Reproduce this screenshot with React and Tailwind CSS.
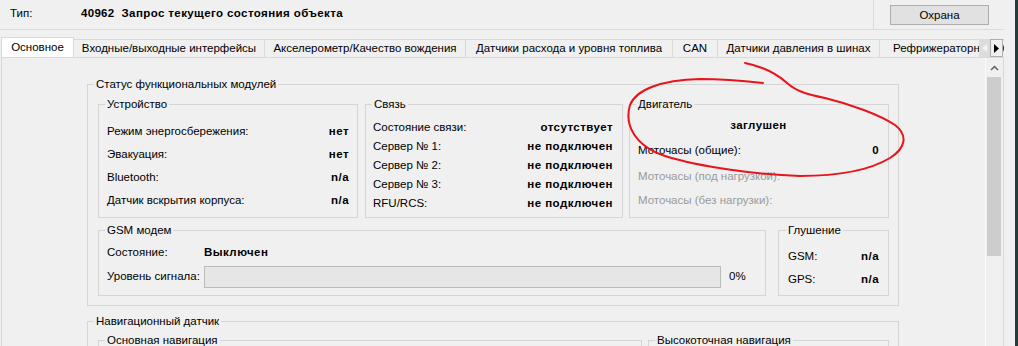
import React from "react";

const tabs = [
    ["Основное", "w-[73px]"],
    ["Входные/выходные интерфейсы", "w-[191px]"],
    ["Акселерометр/Качество вождения", "w-[201px]"],
    ["Датчики расхода и уровня топлива", "w-[207px]"],
    ["CAN", "w-[45px]"],
    ["Датчики давления в шинах", "w-[162px]"],
    ["Рефрижераторное оборудование", "px-[13px]"],
];

function Group({ title, className = "", legend = "ml-[6px]", children }) {
    return (
        <fieldset className={`border border-[#d5d5d5] min-w-0 ${className}`}>
            <legend className={`${legend} px-[2px] leading-[13px] whitespace-nowrap`}>{title}</legend>
            {children}
        </fieldset>
    );
}

function Row({ label, value, h = "h-[23px]", muted }) {
    return (
        <div className={`flex items-center justify-between ${h}`}>
            <span className={muted ? "text-[#9a9a9a]" : ""}>{label}</span>
            {value && <span className="font-bold tracking-[0.45px]">{value}</span>}
        </div>
    );
}

function Scrollbar() {
    return (
        <div className="w-[17px] flex flex-col bg-[#f0f0f0] border-l border-[#fafafa]">
            <div className="h-[19px] flex items-center justify-center">
                <svg width="9" height="6" viewBox="0 0 9 6">
                    <path d="M1 5 L4.5 1.5 L8 5" fill="none" stroke="#606060" strokeWidth="1.5" />
                </svg>
            </div>
            <div className="mx-[1px] h-[179px] bg-[#cdcdcd]" />
        </div>
    );
}

export default function App() {
    return (
        <div className="relative flex w-[1018px] h-[346px] overflow-hidden bg-[#f0f0f0] text-black text-[11.5px] font-['Liberation_Sans',Arial,sans-serif]">
            <div className="w-[1004px] flex flex-col">
                {/* header */}
                <header className="flex h-[30px] shrink-0 border-b border-[#dcdcdc]">
                    <div className="w-[873px] flex items-center pl-[10px] pb-[1px]">
                        <span className="w-[71px]">Тип:</span>
                        <span className="font-bold tracking-[0.3px]">40962</span>
                        <span className="font-bold tracking-[0.4px] ml-[7px]">Запрос текущего состояния объекта</span>
                    </div>
                    <div className="flex-1 border-l border-[#dcdcdc] pl-[16px] pt-[5px]">
                        <button className="w-[99px] h-[20px] border border-[#adadad] bg-[#e1e1e1] leading-[18px]">
                            Охрана
                        </button>
                    </div>
                </header>

                {/* tab strip */}
                <div className="relative flex items-end h-[27px] shrink-0 pl-[1px] overflow-hidden">
                    {tabs.map(([name, w], i) =>
                        i === 0 ? (
                            <div
                                key={name}
                                className={`${w} h-[21px] -mb-[1px] relative z-10 flex items-center justify-center shrink-0 bg-white border-l border-t border-r border-[#d9d9d9] whitespace-nowrap`}
                            >
                                {name}
                            </div>
                        ) : (
                            <div
                                key={name}
                                className={`${w} h-[18px] flex items-center justify-center shrink-0 border-t border-r border-[#d9d9d9] whitespace-nowrap`}
                            >
                                {name}
                            </div>
                        )
                    )}
                    <div className="absolute left-[979px] top-[9px] flex h-[18px] z-20">
                        <div className="w-[11px] bg-[#dcdcdc] flex items-center justify-center">
                            <svg width="5" height="8" viewBox="0 0 5 8">
                                <path d="M5 0 L0 4 L5 8 Z" fill="#f4f4f4" />
                            </svg>
                        </div>
                        <div className="w-[13px] bg-[#f0f0f0] border border-[#adadad] flex items-center justify-center">
                            <svg width="5" height="9" viewBox="0 0 5 9">
                                <path d="M0 0 L5 4.5 L0 9 Z" fill="#000" />
                            </svg>
                        </div>
                    </div>
                </div>

                {/* tab page */}
                <div className="flex flex-1 ml-[1px] w-[1003px] border-t border-l border-r border-[#d9d9d9] overflow-hidden">
                    <div className="flex-1 pl-[85px] pt-[20px] overflow-hidden">
                        <Group title="Статус функциональных модулей" className="w-[812px]">
                            <div className="pl-[10px] pt-[7px] pb-[9px]">
                                <div className="flex">
                                    <Group title="Устройство" className="w-[260px] h-[120px]">
                                        <div className="pl-[8px] pr-[8px] pt-[9px]">
                                            <Row label="Режим энергосбережения:" value="нет" />
                                            <Row label="Эвакуация:" value="нет" />
                                            <Row label="Bluetooth:" value="n/a" />
                                            <Row label="Датчик вскрытия корпуса:" value="n/a" />
                                        </div>
                                    </Group>
                                    <Group title="Связь" className="ml-[7px] w-[258px] h-[120px]">
                                        <div className="pl-[7px] pr-[9px] pt-[7px]">
                                            <Row h="h-[19px]" label="Состояние связи:" value="отсутствует" />
                                            <Row h="h-[19px]" label="Сервер № 1:" value="не подключен" />
                                            <Row h="h-[19px]" label="Сервер № 2:" value="не подключен" />
                                            <Row h="h-[19px]" label="Сервер № 3:" value="не подключен" />
                                            <Row h="h-[19px]" label="RFU/RCS:" value="не подключен" />
                                        </div>
                                    </Group>
                                    <Group title="Двигатель" className="ml-[6px] w-[260px] h-[120px]">
                                        <div className="pl-[8px] pr-[9px] pt-[3px]">
                                            <div className="h-[24px] flex items-center justify-center font-bold tracking-[0.45px]">заглушен</div>
                                            <Row h="h-[26px]" label="Моточасы (общие):" value="0" />
                                            <Row h="h-[25px]" label="Моточасы (под нагрузкой):" muted />
                                            <Row h="h-[24px]" label="Моточасы (без нагрузки):" muted />
                                        </div>
                                    </Group>
                                </div>

                                <div className="flex mt-[6px]">
                                    <Group title="GSM модем" className="w-[668px] h-[72px]">
                                        <div className="pl-[8px] pt-[6px]">
                                            <div className="flex items-center h-[20px]">
                                                <span className="w-[97px]">Состояние:</span>
                                                <span className="font-bold tracking-[0.45px]">Выключен</span>
                                            </div>
                                            <div className="flex items-center h-[22px] mt-[3px]">
                                                <span className="w-[97px]">Уровень сигнала:</span>
                                                <div className="w-[517px] h-[22px] bg-[#e6e6e6] border border-[#bcbcbc]" />
                                                <span className="ml-[8px]">0%</span>
                                            </div>
                                        </div>
                                    </Group>
                                    <Group title="Глушение" legend="ml-[7px]" className="ml-[12px] w-[111px] h-[72px]">
                                        <div className="pl-[9px] pr-[9px] pt-[8px]">
                                            <Row label="GSM:" value="n/a" />
                                            <Row label="GPS:" value="n/a" />
                                        </div>
                                    </Group>
                                </div>
                            </div>
                        </Group>

                        <Group title="Навигационный датчик" className="w-[812px] mt-[9px]">
                            <div className="flex pl-[10px] pt-[6px]">
                                <Group title="Основная навигация" className="w-[544px] h-[80px]" />
                                <Group title="Высокоточная навигация" className="ml-[6px] w-[241px] h-[80px]" />
                            </div>
                        </Group>
                    </div>
                    <Scrollbar />
                    <div className="w-[1px]" />
                </div>
            </div>
            <div className="w-[11px]" />
            <div className="w-[3px] bg-[#233d3d]" />

            {/* hand-drawn annotation */}
            <svg className="absolute inset-0 pointer-events-none" width="1018" height="346">
                <path
                    d="M745 63 C 760 66, 775 72, 787 83 C 797 92, 810 95, 825 98 C 850 104, 880 115, 895 125 C 908 135, 906 148, 890 158 C 870 170, 840 176, 800 176 C 760 175, 700 167, 665 156 C 635 146, 624 125, 630 105 C 636 90, 660 80, 700 79 C 725 79, 745 81, 763 83"
                    fill="none"
                    stroke="#e8141b"
                    strokeWidth="2"
                    strokeLinecap="round"
                />
            </svg>
        </div>
    );
}
